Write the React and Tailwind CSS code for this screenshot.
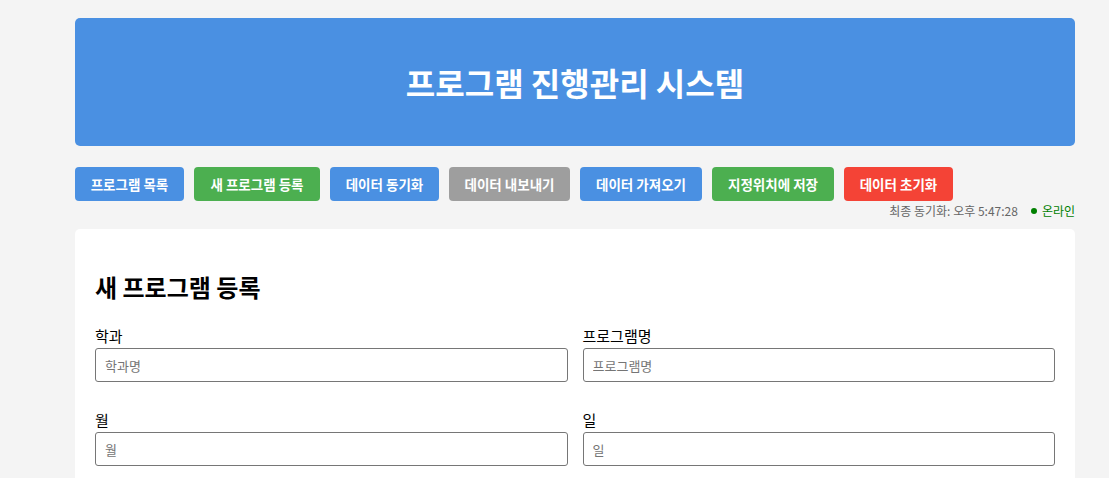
import React from "react";

const font = { fontFamily: '"Noto Sans CJK KR", "Noto Sans", sans-serif' };

const buttons = [
  { label: "프로그램 목록", cls: "w-[109px] bg-[#4a90e2]" },
  { label: "새 프로그램 등록", cls: "w-[126px] bg-[#4caf50]" },
  { label: "데이터 동기화", cls: "w-[109px] bg-[#4a90e2]" },
  { label: "데이터 내보내기", cls: "w-[121px] bg-[#9e9e9e]" },
  { label: "데이터 가져오기", cls: "w-[122px] bg-[#4a90e2]" },
  { label: "지정위치에 저장", cls: "w-[122px] bg-[#4caf50]" },
  { label: "데이터 초기화", cls: "w-[109px] bg-[#f44336]" },
];

function Field({ label, placeholder }) {
  return (
    <div className="mb-[28px]">
      <label className="block text-[15px] leading-[20px] mb-[2px] text-black">{label}</label>
      <input
        className="block w-full h-[34px] border border-[#767676] rounded-[3px] px-[9px] text-[13px] bg-white placeholder:text-[#757575] outline-none"
        placeholder={placeholder}
        style={font}
      />
    </div>
  );
}

export default function App() {
  return (
    <div className="min-h-screen bg-[#f4f4f4]" style={font}>
      <div className="w-[1000px] ml-[75px] pt-[18px]">
        <div className="h-[128px] rounded-[5px] bg-[#4a90e2] flex items-center justify-center">
          <h1 className="text-white text-[32px] font-bold leading-none">프로그램 진행관리 시스템</h1>
        </div>
        <div className="flex gap-[10px] mt-[21px]">
          {buttons.map((b) => (
            <button
              key={b.label}
              className={`${b.cls} h-[34px] rounded-[4px] text-white text-[13.5px] font-bold flex items-center justify-center`}
              style={font}
            >
              {b.label}
            </button>
          ))}
        </div>
        <div className="flex justify-end items-center h-[16px] mt-[2px] text-[12px] leading-none">
          <span className="text-[#666]">최종 동기화: 오후 5:47:28</span>
          <span className="text-[#008000] ml-[13px] flex items-center">
            <span className="inline-block w-[6px] h-[6px] rounded-full bg-[#008000] mr-[5px]"></span>
            온라인
          </span>
        </div>
        <div className="mt-[10px] bg-white rounded-[5px] px-[20px] pt-[20px] pb-[10px]">
          <h2 className="text-[24px] font-bold leading-[32px] mt-[22px] mb-[23px] text-black">새 프로그램 등록</h2>
          <div className="grid grid-cols-2 gap-x-[15px]">
            <Field label="학과" placeholder="학과명" />
            <Field label="프로그램명" placeholder="프로그램명" />
            <Field label="월" placeholder="월" />
            <Field label="일" placeholder="일" />
          </div>
        </div>
      </div>
    </div>
  );
}
